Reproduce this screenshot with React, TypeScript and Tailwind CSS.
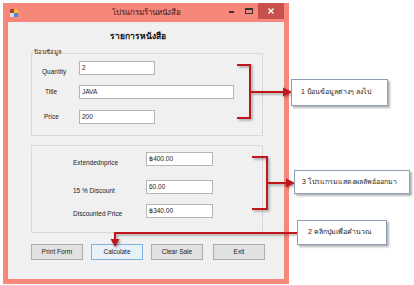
const ui = "font-['Liberation_Sans','DejaVu_Sans',sans-serif]";

function TitleBar() {
  return (
    <div className="grid h-[19px] grid-cols-[1fr_auto_1fr] items-start">
      <div className="flex h-[19px] items-center pl-[2px]">
        <svg width="8" height="8" viewBox="0 0 8 8">
          <rect x="0" y="0" width="4" height="4" fill="#b03a3a" />
          <rect x="4" y="0" width="4" height="4" fill="#f2c21b" />
          <rect x="0" y="4" width="4" height="4" fill="#d9d9d9" />
          <rect x="4" y="4" width="4" height="4" fill="#3b8ee0" />
        </svg>
      </div>
      <div className="flex h-[19px] items-center pt-[1px] text-[8px] text-[#3a1a1a]">โปรแกรมร้านหนังสือ</div>
      <div className="flex items-start justify-end">
        <div className="flex h-[16px] w-[18px] items-center justify-center">
          <div className="mt-[2px] h-[2px] w-[5px] bg-[#333]" />
        </div>
        <div className="flex h-[16px] w-[18px] items-center justify-center">
          <div className="h-[6px] w-[8px] border border-t-2 border-[#333]" />
        </div>
        <div className="flex h-[16px] w-[26px] items-center justify-center bg-[#c9514d]">
          <svg width="6" height="6" viewBox="0 0 6 6">
            <path d="M0.5 0.5L5.5 5.5M5.5 0.5L0.5 5.5" stroke="#fff" strokeWidth="1.4" />
          </svg>
        </div>
      </div>
    </div>
  );
}

function Field({ label, value, w, lp, lm = 0 }: { label: string; value: string; w: string; lp: string; lm?: number }) {
  return (
    <div className="flex h-[14px] items-center">
      <div className={`${lp} text-[6.5px] text-[#222]`} style={{ marginTop: lm }}>
        {label}
      </div>
      <div className={`${w} h-[14px] border border-[#b5b5b5] bg-white pl-[2px] text-[6.5px] leading-[11px] text-[#222]`}>
        {value}
      </div>
    </div>
  );
}

function Btn({ label, active = false }: { label: string; active?: boolean }) {
  return (
    <div
      className={`flex h-[16px] w-[52px] items-center justify-center border text-[6.5px] text-[#222] ${
        active ? 'border-[#7fb2e5] bg-[#e8f1fa]' : 'border-[#adadad] bg-[#e1e1e1]'
      }`}
    >
      {label}
    </div>
  );
}

export default function App() {
  return (
    <div className={`relative h-[285px] w-[414px] overflow-hidden bg-white pl-[3px] pt-[3px] ${ui}`}>
      <div className="flex h-[281px] w-[286px] flex-col bg-[#f6877a] px-[5px] pb-[5px]">
        <TitleBar />
        <div className="flex flex-1 flex-col bg-[#f0f0f0] pl-[23px]">
          <div className="flex h-[31px] w-[232px] items-center justify-center pb-[2px] pr-[18px] text-[8.5px] font-bold text-[#111]">
            รายการหนังสือ
          </div>

          <div className="relative flex h-[83px] w-[232px] flex-col gap-[10px] border border-[#d8d8d8] pt-[7px]">
            <div className="absolute -top-[6px] left-[1px] bg-[#f0f0f0] px-[1px] text-[6px] text-[#222]">ป้อนข้อมูล</div>
            <Field label="Quantity" value="2" w="w-[76px]" lp="w-[47px] pl-[10px]" lm={8} />
            <Field label="Title" value="JAVA" w="w-[155px]" lp="w-[47px] pl-[13px]" />
            <div className="mt-[1px]">
              <Field label="Price" value="200" w="w-[76px]" lp="w-[47px] pl-[12px]" />
            </div>
          </div>

          <div className="mt-[9px] flex h-[88px] w-[232px] flex-col border border-[#d8d8d8] pt-[6px]">
            <Field label="Extendednprice" value="฿400.00" w="w-[67px]" lp="w-[114px] pl-[41px]" lm={8} />
            <div className="mt-[14px]">
              <Field label="15 % Discount" value="60.00" w="w-[67px]" lp="w-[114px] pl-[41px]" lm={7} />
            </div>
            <div className="mt-[10px]">
              <Field label="Discounted Price" value="฿340.00" w="w-[67px]" lp="w-[114px] pl-[41px]" lm={5} />
            </div>
          </div>

          <div className="mt-[11px] flex gap-[8px]">
            <Btn label="Print Form" />
            <Btn label="Calculate" active />
            <Btn label="Clear Sale" />
            <div className="ml-[2px]">
              <Btn label="Exit" />
            </div>
          </div>
        </div>
      </div>

      <svg className="pointer-events-none absolute left-0 top-0" width="414" height="285" viewBox="0 0 414 285">
        <defs>
          <filter id="sh" x="-20%" y="-20%" width="140%" height="140%">
            <feDropShadow dx="1.5" dy="1.5" stdDeviation="0.8" floodColor="#000" floodOpacity="0.35" />
          </filter>
        </defs>
        <g filter="url(#sh)" stroke="#c0141a" strokeWidth="2" fill="none">
          <path d="M237 65H250V118H237" />
          <path d="M250 92H285" />
          <path d="M252 157H267V209H252" />
          <path d="M267 183H287" />
          <path d="M297 233H115V241" />
        </g>
        <g filter="url(#sh)" fill="#c0141a">
          <path d="M283 87.5L292 92L283 96.5Z" />
          <path d="M286 178.5L295 183L286 187.5Z" />
          <path d="M110.5 239L119.5 239L115 247Z" />
        </g>
      </svg>

      <div className="absolute left-[291px] top-[79px] flex h-[27px] w-[97px] items-center border border-[#8d9db5] bg-white pl-[9px] text-[7px] text-[#222] shadow-[2px_2px_2px_rgba(0,0,0,0.3)]">
        1 ป้อนข้อมูลต่างๆ ลงไป
      </div>
      <div className="absolute left-[294px] top-[170px] flex h-[24px] w-[116px] items-center border border-[#8d9db5] bg-white pl-[7px] text-[7px] text-[#222] shadow-[2px_2px_2px_rgba(0,0,0,0.3)]">
        3 โปรแกรมแสดงผลลัพธ์ออกมา
      </div>
      <div className="absolute left-[297px] top-[220px] flex h-[25px] w-[90px] items-center border border-[#8d9db5] bg-white pl-[10px] text-[7px] text-[#222] shadow-[2px_2px_2px_rgba(0,0,0,0.3)]">
        2 คลิกปุ่มเพื่อคำนวณ
      </div>
    </div>
  );
}
